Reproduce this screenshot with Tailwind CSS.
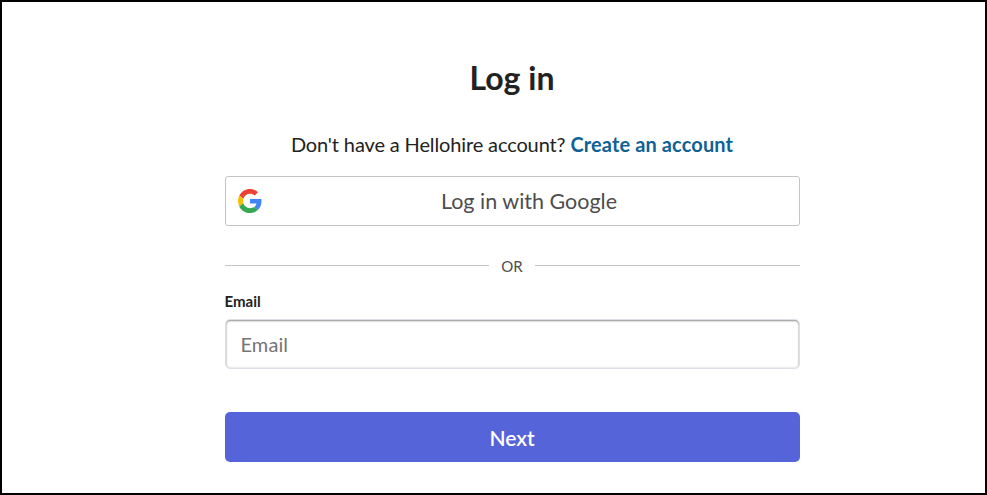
<!DOCTYPE html>
<html lang="en">
<head>
    <meta charset="UTF-8">
    <title>Log in</title>
    <script src="https://cdn.jsdelivr.net/npm/@tailwindcss/browser@4"></script>
</head>
<body class="bg-white">
    <div class="h-[495px] w-[987px] border-2 border-black bg-white font-['Lato',sans-serif] flex flex-col items-center overflow-hidden">
        <div class="w-[575px] ml-[37px] flex flex-col">
            <h1 class="mt-[56px] h-[40px] leading-[40px] text-[32px] font-bold text-center text-[#222222]">Log in</h1>
            <p class="mt-[32px] h-[28px] leading-[28px] text-[20px] tracking-[-0.13px] text-center text-[#222222]">Don't have a Hellohire account? <a href="#" class="font-bold tracking-[0.12px] text-[#0f6196]">Create an account</a></p>
            <button class="mt-[18px] relative h-[50px] w-full rounded-[3px] border border-[#c4c4c4] bg-white pl-[34px] text-[21.5px] text-[#4d4d4d] text-center">
                <svg class="absolute left-[12px] top-[12px]" width="24" height="24" viewBox="0 0 48 48">
                    <path fill="#EA4335" d="M24 9.5c3.54 0 6.71 1.22 9.21 3.6l6.85-6.85C35.9 2.38 30.47 0 24 0 14.62 0 6.51 5.38 2.56 13.22l7.98 6.19C12.43 13.72 17.74 9.5 24 9.5z"/>
                    <path fill="#4285F4" d="M46.98 24.55c0-1.57-.15-3.09-.38-4.55H24v9.02h12.94c-.58 2.96-2.26 5.48-4.78 7.18l7.73 6c4.51-4.18 7.09-10.36 7.09-17.65z"/>
                    <path fill="#FBBC05" d="M10.53 28.59c-.48-1.45-.76-2.99-.76-4.59s.27-3.14.76-4.59l-7.98-6.19C.92 16.46 0 20.12 0 24c0 3.88.92 7.54 2.56 10.78l7.97-6.19z"/>
                    <path fill="#34A853" d="M24 48c6.48 0 11.93-2.13 15.89-5.81l-7.73-6c-2.15 1.45-4.92 2.3-8.16 2.3-6.26 0-11.57-4.22-13.47-9.91l-7.98 6.19C6.51 42.62 14.62 48 24 48z"/>
                </svg>
                Log in with Google
            </button>
            <div class="mt-[29px] h-[20px] flex items-center gap-[12px]">
                <div class="flex-1 h-px bg-[#c4c4c4]"></div>
                <span class="pt-[2px] text-[15px] leading-[22px] text-[#4d4d4d]">OR</span>
                <div class="flex-1 h-px bg-[#c4c4c4]"></div>
            </div>
            <label class="mt-[16px] h-[20px] leading-[20px] text-[15px] font-bold text-[#222222]">Email</label>
            <input type="text" placeholder="Email" class="mt-[8px] h-[50px] w-full rounded-[5px] border border-[#dedee6] shadow-[inset_0_1px_2px_rgba(0,0,0,0.4),inset_0_0_2px_rgba(0,0,0,0.2)] bg-white px-[15px] text-[20px] tracking-[0.1px] text-[#222222] placeholder:text-[#757575] outline-none">
            <button class="mt-[43px] h-[50px] w-full rounded-[5px] bg-[#5664d9] pt-[1px] text-[21px] font-semibold text-white">Next</button>
        </div>
    </div>
</body>
</html>
